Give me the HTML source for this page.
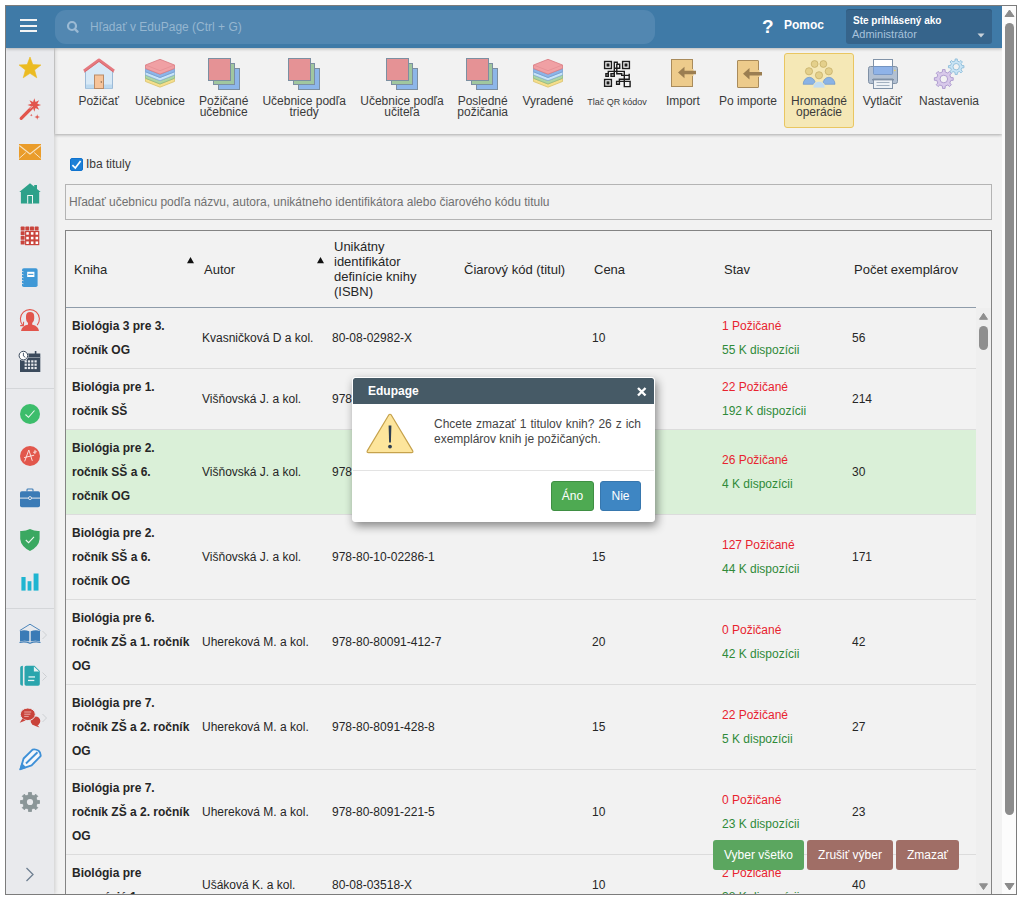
<!DOCTYPE html>
<html><head><meta charset="utf-8">
<style>
*{box-sizing:border-box;margin:0;padding:0}
html,body{width:1022px;height:900px;overflow:hidden;background:#fff;font-family:"Liberation Sans",sans-serif;}
.a{position:absolute}
#frame{position:absolute;left:5px;top:5px;width:1012px;height:890px;border:1px solid #7c7c7c;}
#clip{position:absolute;left:6px;top:6px;width:1010px;height:888px;overflow:hidden;background:#f2f2f2}
#hdr{left:0;top:0;width:996px;height:42px;background:#3f7aa7;box-shadow:0 1px 3px rgba(0,0,0,.25);z-index:5}
#srch{left:49px;top:4px;width:600px;height:34px;border-radius:11px;background:#5287b1}
#side{left:0;top:42px;width:48px;height:846px;background:#e9eaed;box-shadow:1px 0 4px rgba(0,0,0,.16);z-index:3}
#tb{left:49px;top:42px;width:947px;height:86px;background:#f2f2f2;box-shadow:0 1px 3px rgba(0,0,0,.3);z-index:2}
#osb{left:996px;top:0;width:14px;height:888px;background:#fcfcfc;z-index:6}
.tl{position:absolute;width:120px;margin-left:-60px;text-align:center;font-size:12px;line-height:11px;color:#3b3b3b;white-space:nowrap;margin-top:1px}
svg{position:absolute;overflow:visible}
.hd{position:absolute;font-size:13px;line-height:15px;color:#262626;white-space:nowrap}
.rw{position:absolute;left:66px;width:910px;border-bottom:1px solid #dcdcdc}
.c{position:absolute;top:0;display:flex;align-items:center;padding:0 6px;font-size:12px;line-height:24px;color:#262626;white-space:nowrap}
.t{font-weight:bold}
.btn{position:absolute;border-radius:3px;color:#fff;font-size:12px;line-height:14px;display:flex;align-items:center;justify-content:center;white-space:nowrap}

.rd{color:#e8232f}.gr{color:#2f8a39}

</style></head>
<body>
<div id="frame"></div>
<div id="clip">
 <!-- HEADER -->
 <div id="hdr" class="a">
  <div class="a" style="left:14px;top:13px;width:17px;height:2px;background:#f4f4f4"></div>
  <div class="a" style="left:14px;top:18.5px;width:17px;height:2px;background:#f4f4f4"></div>
  <div class="a" style="left:14px;top:24px;width:17px;height:2px;background:#f4f4f4"></div>
  <div id="srch" class="a">
   <svg style="left:0;top:0" width="40" height="34"><circle cx="17" cy="16" r="4" fill="none" stroke="#9bbad4" stroke-width="2.2"/><line x1="19.8" y1="19" x2="22.5" y2="21.7" stroke="#9bbad4" stroke-width="2.4" stroke-linecap="round"/></svg>
   <div class="a" style="left:35px;top:10px;font-size:12px;line-height:14px;color:#95b6d0;white-space:nowrap">Hľadať v EduPage (Ctrl + G)</div>
  </div>
  <div class="a" style="left:756px;top:10.5px;font-size:19px;line-height:20px;font-weight:bold;color:#fff">?</div>
  <div class="a" style="left:778px;top:12px;font-size:12px;line-height:14px;font-weight:bold;color:#fff">Pomoc</div>
  <div class="a" style="left:840px;top:3px;width:146px;height:35px;border-radius:3px;background:#36648b;box-shadow:inset 0 1px 0 rgba(0,0,0,.12)">
   <div class="a" style="left:7px;top:6px;font-size:10px;line-height:12px;font-weight:bold;color:#fff;white-space:nowrap">Ste prihlásený ako</div>
   <div class="a" style="left:6px;top:19px;font-size:11px;line-height:13px;color:#a7c2dc;white-space:nowrap">Administrátor</div>
   <svg style="left:131px;top:24px" width="10" height="6"><path d="M0.5 0.5 L7.5 0.5 L4 4.5 Z" fill="#c9d2da"/></svg>
  </div>
 </div>

 <!-- SIDEBAR -->
 <div id="side" class="a"></div>
<svg style="left:-6px;top:-6px;z-index:4" width="60" height="900">
 <line x1="6" y1="388.5" x2="54" y2="388.5" stroke="#d4d6d9" stroke-width="1"/>
 <line x1="6" y1="608.5" x2="54" y2="608.5" stroke="#d4d6d9" stroke-width="1"/>
 <!-- star -->
 <path d="M30.00,57.00 L32.82,64.62 L40.94,64.95 L34.57,69.98 L36.76,77.80 L30.00,73.30 L23.24,77.80 L25.43,69.98 L19.06,64.95 L27.18,64.62Z" fill="#ebbb22" stroke="#ebbb22" stroke-width="0.6" stroke-linejoin="round"/>
 <!-- wand -->
 <path d="M34.30,98.20 L35.52,102.04 L39.11,100.19 L37.26,103.78 L41.10,105.00 L37.26,106.22 L39.11,109.81 L35.52,107.96 L34.30,111.80 L33.08,107.96 L29.49,109.81 L31.34,106.22 L27.50,105.00 L31.34,103.78 L29.49,100.19 L33.08,102.04Z" fill="#e2554c"/>
 <line x1="21.2" y1="118.3" x2="31.5" y2="108" stroke="#e2554c" stroke-width="3.2" stroke-linecap="round"/>
 <line x1="30" y1="108.6" x2="32.6" y2="106" stroke="#e9eaed" stroke-width="0.9"/>
 <path d="M37.20,114.20 L37.84,116.36 L40.00,117.00 L37.84,117.64 L37.20,119.80 L36.56,117.64 L34.40,117.00 L36.56,116.36Z" fill="#e2554c"/>
 <path d="M31.30,113.80 L31.65,114.85 L32.70,115.20 L31.65,115.55 L31.30,116.60 L30.95,115.55 L29.90,115.20 L30.95,114.85Z" fill="#e2554c"/>
 <!-- mail -->
 <rect x="19" y="144" width="22" height="16" fill="#ea9c2a"/>
 <path d="M19.3 145.5 L30 154 L40.7 145.5" fill="none" stroke="#f7e3c2" stroke-width="1.1"/>
 <path d="M19.3 158.3 L25.8 152.6 M40.7 158.3 L34.2 152.6" fill="none" stroke="#f7e3c2" stroke-width="1"/>
 <!-- house -->
 <path d="M30 183.3 L40.7 192 L39.2 192 L39.2 203.6 L20.9 203.6 L20.9 192 L19.3 192 Z" fill="#2da18a"/>
 <rect x="34.2" y="185" width="2.8" height="5" fill="#2da18a"/>
 <rect x="27.2" y="195" width="5.8" height="8.6" fill="#f2f7f5"/>
 <rect x="28.2" y="196" width="3.8" height="7.6" fill="#2da18a"/>
 <!-- grid -->
 <rect x="25.05" y="230.95" width="14.25" height="14.25" fill="#c9443c"/>
 <rect x="20.70" y="226.60" width="3.95" height="3.95" rx="0.6" fill="#c9443c"/>
 <rect x="25.35" y="226.60" width="3.95" height="3.95" rx="0.6" fill="#c9443c"/>
 <rect x="30.00" y="226.60" width="3.95" height="3.95" rx="0.6" fill="#c9443c"/>
 <rect x="34.65" y="226.60" width="3.95" height="3.95" rx="0.6" fill="#c9443c"/>
 <rect x="20.70" y="231.25" width="3.95" height="3.95" rx="0.6" fill="#c9443c"/>
 <rect x="20.70" y="235.90" width="3.95" height="3.95" rx="0.6" fill="#c9443c"/>
 <rect x="20.70" y="240.55" width="3.95" height="3.95" rx="0.6" fill="#c9443c"/>
 <rect x="26.25" y="232.15" width="2.55" height="2.55" fill="#fff"/>
 <rect x="26.25" y="236.80" width="2.55" height="2.55" fill="#fff"/>
 <rect x="26.25" y="241.45" width="2.55" height="2.55" fill="#fff"/>
 <rect x="30.90" y="232.15" width="2.55" height="2.55" fill="#fff"/>
 <rect x="30.90" y="236.80" width="2.55" height="2.55" fill="#fff"/>
 <rect x="30.90" y="241.45" width="2.55" height="2.55" fill="#fff"/>
 <rect x="35.55" y="232.15" width="2.55" height="2.55" fill="#fff"/>
 <rect x="35.55" y="236.80" width="2.55" height="2.55" fill="#fff"/>
 <rect x="35.55" y="241.45" width="2.55" height="2.55" fill="#fff"/>
 <!-- notebook -->
 <rect x="22" y="268.3" width="15.6" height="18.7" rx="1.8" fill="#3f98d6"/>
 <rect x="27.2" y="271.8" width="7.2" height="5.2" fill="#fff"/>
 <rect x="28.2" y="273.8" width="5.2" height="1.1" fill="#3f98d6"/>
 <g stroke="#e9eaed" stroke-width="0.8"><line x1="21" y1="271" x2="23.5" y2="271.8"/><line x1="21" y1="274" x2="23.5" y2="274.8"/><line x1="21" y1="277" x2="23.5" y2="277.8"/><line x1="21" y1="280" x2="23.5" y2="280.8"/><line x1="21" y1="283" x2="23.5" y2="283.8"/></g>
 <!-- person -->
 <path d="M22.6 325.2 A9.5 9.5 0 1 1 37.2 325.2" fill="none" stroke="#e2554c" stroke-width="1.05"/>
 <path d="M20.2 325.6 L23.4 325.6 L23.6 321.8" fill="none" stroke="#e2554c" stroke-width="1.05"/>
 <path d="M26 316.3 Q26 312 30.1 312 Q34.2 312 34.2 316.3 L34.2 318.5 Q34.2 321.5 32.2 323 L32.2 325 L28 325 L28 323 Q26 321.5 26 318.5 Z" fill="#e2554c"/>
 <path d="M21 331 Q21.8 326 27.5 324.8 L32.5 324.8 Q38.2 326 39 331 Z" fill="#e2554c"/>
 <!-- calendar -->
 <rect x="20" y="353.5" width="20.3" height="18.5" fill="#3b4a5c"/>
 <rect x="34.8" y="351" width="1.6" height="4" fill="#3b4a5c"/>
 <rect x="20" y="357" width="20.3" height="0.8" fill="#9aa3ad"/>
 <g fill="#e9eaed">
  <rect x="24.6" y="360.3" width="2.2" height="2.2"/>
  <rect x="27.9" y="360.3" width="2.2" height="2.2"/>
  <rect x="31.2" y="360.3" width="2.2" height="2.2"/>
  <rect x="34.5" y="360.3" width="2.2" height="2.2"/>
  <rect x="24.6" y="363.6" width="2.2" height="2.2"/>
  <rect x="27.9" y="363.6" width="2.2" height="2.2"/>
  <rect x="31.2" y="363.6" width="2.2" height="2.2"/>
  <rect x="34.5" y="363.6" width="2.2" height="2.2"/>
  <rect x="24.6" y="366.9" width="2.2" height="2.2"/>
  <rect x="27.9" y="366.9" width="2.2" height="2.2"/>
  <rect x="31.2" y="366.9" width="2.2" height="2.2"/>
  <rect x="34.5" y="366.9" width="2.2" height="2.2"/>
 </g>
 <circle cx="23.4" cy="355.6" r="5.2" fill="#e9eaed"/>
 <circle cx="23.4" cy="355.6" r="4.3" fill="#fff" stroke="#3b4a5c" stroke-width="1"/>
 <path d="M23.4 352.8 L23.4 356 L25.3 357.3" fill="none" stroke="#3b4a5c" stroke-width="0.9"/>
 <!-- check badge -->
 <circle cx="30" cy="414" r="10" fill="#3cbd6b"/>
 <path d="M25.5 414.5 L28.5 417.3 L34.5 410.5" fill="none" stroke="#eaf7ee" stroke-width="1.1"/>
 <!-- A+ -->
 <circle cx="30" cy="456" r="10" fill="#e2574c"/>
 <path d="M24.8 461 L28.8 450 L32.2 460.5 M24.5 457.5 L33.8 455.3 M33.6 452.3 L36.4 451.8 M35 450.3 L34.9 453.6" fill="none" stroke="#fbe6e4" stroke-width="0.95" stroke-linecap="round"/>
 <!-- briefcase -->
 <rect x="20" y="491.3" width="20" height="16" rx="1.8" fill="#3b7bb6"/>
 <path d="M27 491.5 L27 489.8 Q27 489 28 489 L32 489 Q33 489 33 489.8 L33 491.5" fill="none" stroke="#3b7bb6" stroke-width="1.1"/>
 <rect x="20" y="497.6" width="20" height="1" fill="#e9eaed"/>
 <circle cx="30" cy="498.1" r="1.5" fill="#3b7bb6" stroke="#e9eaed" stroke-width="0.9"/>
 <!-- shield -->
 <path d="M30 529 Q35 531.5 39.6 531 L39.6 539 Q39 546.5 30 551 Q21 546.5 20.2 539 L20.2 531 Q25 531.5 30 529 Z" fill="#3aa861"/>
 <path d="M25.8 540 L28.6 542.7 L34 536.8" fill="none" stroke="#eaf7ee" stroke-width="1.1"/>
 <!-- chart -->
 <g fill="#1fb5d1"><rect x="21.4" y="577" width="4.2" height="13.6"/><rect x="27.6" y="581.2" width="3.8" height="9.4"/><rect x="33.6" y="573.5" width="4.9" height="17.1"/></g>
 <!-- book -->
 <path d="M19.8 630.5 L30 624.2 L40.3 630.5" fill="none" stroke="#3b7bb6" stroke-width="0.9"/>
 <path d="M20 631 Q24.5 629.5 29.3 631.3 L29.3 641.5 Q24.5 640 20 641.5 Z M30.7 631.3 Q35.5 629.5 40 631 L40 641.5 Q35.5 640 30.7 641.5 Z" fill="#3b7bb6"/>
 <path d="M19.5 642.5 Q25 641 30 643.3 Q35 641 40.5 642.5" fill="none" stroke="#3b7bb6" stroke-width="1.2"/>
 <!-- doc -->
 <path d="M22.9 665.8 L22.9 685.7 Q20.2 685.7 20.2 683.5 L20.2 668 Q20.2 665.8 22.9 665.8 Z" fill="#2aa5ad"/>
 <path d="M24.5 667.5 Q24.5 665.8 26.2 665.8 L34.5 665.8 L39.8 671 L39.8 684 Q39.8 685.7 38.1 685.7 L26.2 685.7 Q24.5 685.7 24.5 684 Z" fill="#2aa5ad"/>
 <path d="M33.9 666.4 L39.2 671.6 L33.9 671.6 Z" fill="#e9f3f4"/>
 <rect x="28.5" y="676.3" width="6.5" height="1.3" fill="#e6f4f5"/>
 <rect x="28" y="679.8" width="6.3" height="1.3" fill="#e6f4f5"/>
 <!-- chat -->
 <ellipse cx="35.5" cy="721" rx="4.8" ry="4.5" fill="#c9433a"/>
 <path d="M37 724.5 L39.5 727.5 L34 725.5 Z" fill="#c9433a"/>
 <ellipse cx="27.8" cy="714.3" rx="7.5" ry="6.3" fill="#c9433a" stroke="#e9eaed" stroke-width="1"/>
 <path d="M22.5 718.5 L19.7 722.8 L25.5 720.5 Z" fill="#c9433a"/>
 <g fill="#e7a9a4"><rect x="24.2" y="711.5" width="7" height="1"/><rect x="24.2" y="713.7" width="6.2" height="1"/><rect x="24.2" y="715.9" width="4.5" height="1"/></g>
 <!-- chevrons small -->
 <path d="M42.5 631 L46.5 635 L42.5 639" fill="none" stroke="#c9ccd0" stroke-width="0.9"/>
 <path d="M42.5 672.5 L46.5 676.5 L42.5 680.5" fill="none" stroke="#c9ccd0" stroke-width="0.9"/>
 <path d="M42.5 714 L46.5 718 L42.5 722" fill="none" stroke="#c9ccd0" stroke-width="0.9"/>
 <!-- pencil -->
 <path d="M23.6 758.5 L32.6 749.6 Q35.5 748.8 38.6 750.8 Q41 752.8 40.6 756.2 L31.6 765.3 L20.5 769.2 Z" fill="#f4f7fb" stroke="#3e90d7" stroke-width="1.9" stroke-linejoin="round"/>
 <path d="M26 763.5 L37.5 752.3" fill="none" stroke="#3e90d7" stroke-width="1.9"/>
 <path d="M19.2 770.2 L21.6 762.8 L26.6 767.8 Z" fill="#3e90d7"/>
 <!-- gear -->
 <path d="M37.15,800.52 L39.48,800.48 L39.48,803.52 L37.15,803.48 L36.10,806.01 L37.78,807.63 L35.63,809.78 L34.01,808.10 L31.48,809.15 L31.52,811.48 L28.48,811.48 L28.52,809.15 L25.99,808.10 L24.37,809.78 L22.22,807.63 L23.90,806.01 L22.85,803.48 L20.52,803.52 L20.52,800.48 L22.85,800.52 L23.90,797.99 L22.22,796.37 L24.37,794.22 L25.99,795.90 L28.52,794.85 L28.48,792.52 L31.52,792.52 L31.48,794.85 L34.01,795.90 L35.63,794.22 L37.78,796.37 L36.10,797.99Z" fill="#8b9698" stroke="#8b9698" stroke-width="0.9" stroke-linejoin="round"/>
 <circle cx="30" cy="802" r="3.1" fill="#e9eaed"/>
 <!-- bottom chevron -->
 <path d="M26.5 868 L33 874.5 L26.5 881" fill="none" stroke="#6e7f91" stroke-width="1.3"/>
</svg>

 <!-- TOOLBAR -->
 <div id="tb" class="a"></div>
 <div class="a" style="left:-6px;top:-6px;width:1010px;height:140px;z-index:3">
  <!-- highlight box -->
  <div class="a" style="left:784px;top:53px;width:70px;height:75px;background:#f5e8b6;border:1px solid #e9c661;border-radius:3px"></div>
  <svg style="left:0;top:0" width="1010" height="140">
   <!-- house -->
   <path d="M85.5 70 L99 60.5 L112.5 70 L112.5 88.5 L85.5 88.5 Z" fill="#d8e9f6" stroke="#9cbad7" stroke-width="1"/>
   <rect x="86" y="84.5" width="26" height="3.8" fill="#bcd9ef"/>
   <path d="M84 71 L99 60 L114 71" fill="none" stroke="#e57a80" stroke-width="3" stroke-linejoin="round"/>
   <path d="M84 71 L99 60 L114 71" fill="none" stroke="#cf5c62" stroke-width="0.6" stroke-linejoin="round" transform="translate(0,1.4)"/>
   <rect x="94.5" y="75" width="9" height="13.5" fill="#f6c49a" stroke="#b98b67" stroke-width="1"/>
   <circle cx="101.3" cy="82" r="0.7" fill="#7a5a40"/>
   <!-- layers 1 -->
   <g transform="translate(145,59.3)">
    <path d="M0.5 19 L15 24.7 L29.5 19 L29.5 22.2 L15 27.9 L0.5 22.2 Z" fill="#f5df8c" stroke="#d6bb62" stroke-width="0.7"/>
    <path d="M0.5 15.7 L15 21.4 L29.5 15.7 L29.5 19 L15 24.7 L0.5 19 Z" fill="#acd5a6" stroke="#86b57f" stroke-width="0.7"/>
    <path d="M0.5 12.5 L15 18.2 L29.5 12.5 L29.5 15.7 L15 21.4 L0.5 15.7 Z" fill="#c8e4f7" stroke="#7fa9d6" stroke-width="0.7"/>
    <path d="M0.5 9.2 L15 14.9 L29.5 9.2 L29.5 12.5 L15 18.2 L0.5 12.5 Z" fill="#8cb5e9" stroke="#6e98cc" stroke-width="0.7"/>
    <path d="M0.5 5.7 L15 0 L29.5 5.7 L29.5 9.2 L15 14.9 L0.5 9.2 Z" fill="#f0a0a4" stroke="#d97a80" stroke-width="0.8"/>
    <path d="M0.5 5.7 L15 11.4 L29.5 5.7" fill="none" stroke="#e08a8f" stroke-width="0.6"/>
   </g>
   <!-- squares -->
   <g>
    <rect x="218.5" y="68.5" width="21" height="21" fill="#8db6e9" stroke="#7c8fa1" stroke-width="1"/>
    <rect x="213.5" y="63.5" width="21" height="21" fill="#a0c79f" stroke="#7c8fa1" stroke-width="1"/>
    <rect x="208.5" y="58.5" width="22" height="22" fill="#e59295" stroke="#7c8fa1" stroke-width="1"/>
   </g>
   <g transform="translate(80,0)">
    <rect x="218.5" y="68.5" width="21" height="21" fill="#8db6e9" stroke="#7c8fa1" stroke-width="1"/>
    <rect x="213.5" y="63.5" width="21" height="21" fill="#a0c79f" stroke="#7c8fa1" stroke-width="1"/>
    <rect x="208.5" y="58.5" width="22" height="22" fill="#e59295" stroke="#7c8fa1" stroke-width="1"/>
   </g>
   <g transform="translate(178,0)">
    <rect x="218.5" y="68.5" width="21" height="21" fill="#8db6e9" stroke="#7c8fa1" stroke-width="1"/>
    <rect x="213.5" y="63.5" width="21" height="21" fill="#a0c79f" stroke="#7c8fa1" stroke-width="1"/>
    <rect x="208.5" y="58.5" width="22" height="22" fill="#e59295" stroke="#7c8fa1" stroke-width="1"/>
   </g>
   <g transform="translate(258,0)">
    <rect x="218.5" y="68.5" width="21" height="21" fill="#8db6e9" stroke="#7c8fa1" stroke-width="1"/>
    <rect x="213.5" y="63.5" width="21" height="21" fill="#a0c79f" stroke="#7c8fa1" stroke-width="1"/>
    <rect x="208.5" y="58.5" width="22" height="22" fill="#e59295" stroke="#7c8fa1" stroke-width="1"/>
   </g>
   <!-- layers 2 -->
   <g transform="translate(533,59.3)">
    <path d="M0.5 19 L15 24.7 L29.5 19 L29.5 22.2 L15 27.9 L0.5 22.2 Z" fill="#f5df8c" stroke="#d6bb62" stroke-width="0.7"/>
    <path d="M0.5 15.7 L15 21.4 L29.5 15.7 L29.5 19 L15 24.7 L0.5 19 Z" fill="#acd5a6" stroke="#86b57f" stroke-width="0.7"/>
    <path d="M0.5 12.5 L15 18.2 L29.5 12.5 L29.5 15.7 L15 21.4 L0.5 15.7 Z" fill="#c8e4f7" stroke="#7fa9d6" stroke-width="0.7"/>
    <path d="M0.5 9.2 L15 14.9 L29.5 9.2 L29.5 12.5 L15 18.2 L0.5 12.5 Z" fill="#8cb5e9" stroke="#6e98cc" stroke-width="0.7"/>
    <path d="M0.5 5.7 L15 0 L29.5 5.7 L29.5 9.2 L15 14.9 L0.5 9.2 Z" fill="#f0a0a4" stroke="#d97a80" stroke-width="0.8"/>
    <path d="M0.5 5.7 L15 11.4 L29.5 5.7" fill="none" stroke="#e08a8f" stroke-width="0.6"/>
   </g>
   <!-- QR -->
   <g fill="none" stroke="#1c1c1c" stroke-width="1.4">
    <rect x="604.6" y="61.5" width="6.8" height="7" fill="#fff"/><rect x="622.6" y="61.5" width="6.8" height="7" fill="#fff"/><rect x="604.6" y="79.5" width="6.8" height="6.8" fill="#fff"/>
    <path d="M614.3 62.3 L617.2 62.3 L617.2 64.3 L619.7 64.3 L619.7 68.3 L614.3 68.3 Z M616.8 63.9 L616.8 73.7 L621.7 73.7 L621.7 75.4 L629.2 75.4 L629.2 79.2 L619.4 79.2 L619.4 84.3 L616.6 84.3 L616.6 81.4 L630.1 81.4 L630.1 86.6 L624.3 86.6 L624.3 71.4 L608.3 71.4 L608.3 76.3 L605.9 76.3 L605.9 73.7 L608.3 73.7 M614.3 68.3 L614.3 76.3 L611 76.3 L611 73.7 L614.3 73.7 M629.2 75.4 L629.2 73.7"/>
   </g>
   <g fill="#1c1c1c"><rect x="606.5" y="63.4" width="3" height="3.2"/><rect x="624.5" y="63.4" width="3" height="3.2"/><rect x="606.5" y="81.3" width="3" height="3.2"/></g>
   <!-- import 1 -->
   <rect x="671.5" y="59.5" width="21" height="27" fill="#edcb8b" stroke="#a98b5b" stroke-width="1"/>
   <rect x="691.5" y="69" width="2" height="7" fill="#edcb8b"/>
   <path d="M678 72.5 L684.5 66.8 L684.5 70.8 L696 70.8 L696 74.2 L684.5 74.2 L684.5 78.2 Z" fill="#9b7e51"/>
   <!-- import 2 -->
   <rect x="737.5" y="60.5" width="21" height="27" rx="0.5" fill="#edcb8b" stroke="#a98b5b" stroke-width="1"/>
   <rect x="757.5" y="70" width="2" height="7" fill="#edcb8b"/>
   <path d="M743 73.7 L749.5 68 L749.5 72 L762 72 L762 75.4 L749.5 75.4 L749.5 79.4 Z" fill="#9b7e51"/>
   <!-- people -->
   <g fill="#e4d08b" stroke="#c7b06a" stroke-width="0.8">
    <circle cx="814.6" cy="64" r="3.4"/><circle cx="823.4" cy="64" r="3.4"/><circle cx="809" cy="71.3" r="3.6"/><circle cx="828.8" cy="71.3" r="3.6"/><circle cx="819" cy="75.3" r="3.6"/>
   </g>
   <path d="M803.2 84.3 A6.1 7 0 0 1 815.4 84.3 Z" fill="#8ab3e5" stroke="#6f97c8" stroke-width="0.7"/>
   <path d="M822.8 84.3 A6.1 7 0 0 1 835 84.3 Z" fill="#8ab3e5" stroke="#6f97c8" stroke-width="0.7"/>
   <path d="M812.8 88 A6.2 6.8 0 0 1 825.2 88 Z" fill="#c2ddf2" stroke="#f5e8b6" stroke-width="0.8"/>
   <!-- printer -->
   <rect x="873.5" y="59.5" width="19" height="9" fill="#fff" stroke="#8193a8" stroke-width="1"/>
   <rect x="868.5" y="66.5" width="29" height="17" rx="2" fill="#b2c0d2" stroke="#7f90a5" stroke-width="1"/>
   <rect x="873.5" y="66.5" width="19" height="8" rx="1" fill="#8fb3e8" stroke="#7090c0" stroke-width="0.8"/>
   <circle cx="894.8" cy="70.5" r="0.8" fill="#f0d24a"/>
   <rect x="873.5" y="79" width="19" height="9.5" fill="#eef2f6" stroke="#8193a8" stroke-width="1"/>
   <rect x="872" y="79" width="22" height="1.4" fill="#7f90a5"/>
   <line x1="876.5" y1="82.5" x2="889.5" y2="82.5" stroke="#9aa9ba" stroke-width="0.9"/>
   <line x1="876.5" y1="85.5" x2="889.5" y2="85.5" stroke="#9aa9ba" stroke-width="0.9"/>
   <!-- gears -->
   <path id="g1" fill-rule="evenodd" d="M950.86,77.60 L953.21,77.70 L953.21,80.30 L950.86,80.40 L949.79,83.00 L951.37,84.73 L949.53,86.57 L947.80,84.99 L945.20,86.06 L945.10,88.41 L942.50,88.41 L942.40,86.06 L939.80,84.99 L938.07,86.57 L936.23,84.73 L937.81,83.00 L936.74,80.40 L934.39,80.30 L934.39,77.70 L936.74,77.60 L937.81,75.00 L936.23,73.27 L938.07,71.43 L939.80,73.01 L942.40,71.94 L942.50,69.59 L945.10,69.59 L945.20,71.94 L947.80,73.01 L949.53,71.43 L951.37,73.27 L949.79,75.00Z M947.60,79.00 A3.8 3.8 0 1 0 940.00,79.00 A3.8 3.8 0 1 0 947.60,79.00Z" fill="#d8c9ea" stroke="#a996cc" stroke-width="0.9"/>
   <path id="g2" fill-rule="evenodd" d="M961.89,65.57 L963.93,65.63 L963.93,67.77 L961.89,67.83 L961.02,69.92 L962.42,71.41 L960.91,72.92 L959.42,71.52 L957.33,72.39 L957.27,74.43 L955.13,74.43 L955.07,72.39 L952.98,71.52 L951.49,72.92 L949.98,71.41 L951.38,69.92 L950.51,67.83 L948.47,67.77 L948.47,65.63 L950.51,65.57 L951.38,63.48 L949.98,61.99 L951.49,60.48 L952.98,61.88 L955.07,61.01 L955.13,58.97 L957.27,58.97 L957.33,61.01 L959.42,61.88 L960.91,60.48 L962.42,61.99 L961.02,63.48Z M959.40,66.70 A3.2 3.2 0 1 0 953.00,66.70 A3.2 3.2 0 1 0 959.40,66.70Z" fill="#c9e4f5" stroke="#8cbcd9" stroke-width="0.9"/>
  </svg>
  <!-- labels -->
  <div class="tl" style="left:98.7px;top:95px">Požičať</div>
  <div class="tl" style="left:160px;top:95px">Učebnice</div>
  <div class="tl" style="left:223.7px;top:95px">Požičané<br>učebnice</div>
  <div class="tl" style="left:304.2px;top:95px">Učebnice podľa<br>triedy</div>
  <div class="tl" style="left:402px;top:95px">Učebnice podľa<br>učiteľa</div>
  <div class="tl" style="left:482.7px;top:95px">Posledné<br>požičania</div>
  <div class="tl" style="left:547.9px;top:95px">Vyradené</div>
  <div class="tl" style="left:617px;top:96px;font-size:9px">Tlač QR kódov</div>
  <div class="tl" style="left:682.9px;top:95px">Import</div>
  <div class="tl" style="left:748px;top:95px">Po importe</div>
  <div class="tl" style="left:819px;top:95px">Hromadné<br>operácie</div>
  <div class="tl" style="left:882.4px;top:95px">Vytlačiť</div>
  <div class="tl" style="left:949px;top:95px">Nastavenia</div>
 </div>

 <!-- CONTENT -->
 <div class="a" style="left:-6px;top:-6px;width:1010px;height:900px;z-index:1">
  <div class="a" style="left:70px;top:158px;width:13px;height:13px;border-radius:2px;background:#1e80d6;border:1px solid #0f73cf"></div>
  <svg style="left:70px;top:158px" width="13" height="13"><path d="M2.4 7.2 L5.3 10 L10.6 3" fill="none" stroke="#fff" stroke-width="1.7"/></svg>
  <div class="a" style="left:86px;top:157px;font-size:12px;line-height:14px;color:#3a3a3a">Iba tituly</div>
  <div class="a" style="left:65px;top:184px;width:927px;height:36px;border:1px solid #b4b4b4"></div>
  <div class="a" style="left:69px;top:195px;font-size:12px;line-height:14px;color:#707070;white-space:nowrap">Hľadať učebnicu podľa názvu, autora, unikátneho identifikátora alebo čiarového kódu titulu</div>
  <!-- table -->
  <div class="a" style="left:65px;top:230px;width:927px;height:680px;border:1px solid #848484"></div>
  <div class="a" style="left:66px;top:307px;width:910px;height:1px;background:#8f9caa"></div>
  <div class="hd" style="left:74px;top:262px">Kniha</div>
  <div class="hd" style="left:204px;top:262px">Autor</div>
  <div class="hd" style="left:334px;top:239px">Unikátny<br>identifikátor<br>definície knihy<br>(ISBN)</div>
  <div class="hd" style="left:464px;top:262px">Čiarový kód (titul)</div>
  <div class="hd" style="left:594px;top:262px">Cena</div>
  <div class="hd" style="left:724px;top:262px">Stav</div>
  <div class="hd" style="left:854px;top:262px">Počet exemplárov</div>
  <svg style="left:0;top:0" width="1000" height="300"><path d="M187 263.3 L190.5 257 L194 263.3 Z M317 263.3 L320.5 257 L324 263.3 Z" fill="#111"/></svg>
  <!-- rows -->
  <div class="rw" style="top:308px;height:61px;">
   <div class="c t" style="left:0;width:130px;height:60px"><div>Biológia 3 pre 3.<br>ročník OG</div></div>
   <div class="c" style="left:130px;width:130px;height:60px"><div>Kvasničková D a kol.</div></div>
   <div class="c" style="left:260px;width:130px;height:60px"><div>80-08-02982-X</div></div>
   <div class="c" style="left:390px;width:130px;height:60px"><div></div></div>
   <div class="c" style="left:520px;width:130px;height:60px"><div>10</div></div>
   <div class="c" style="left:650px;width:130px;height:60px"><div><span class="rd">1 Požičané</span><br><span class="gr">55 K dispozícii</span></div></div>
   <div class="c" style="left:780px;width:130px;height:60px"><div>56</div></div>
  </div>
  <div class="rw" style="top:369px;height:61px;">
   <div class="c t" style="left:0;width:130px;height:60px"><div>Biológia pre 1.<br>ročník SŠ</div></div>
   <div class="c" style="left:130px;width:130px;height:60px"><div>Višňovská J. a kol.</div></div>
   <div class="c" style="left:260px;width:130px;height:60px"><div>978-80-10-01234-5</div></div>
   <div class="c" style="left:390px;width:130px;height:60px"><div></div></div>
   <div class="c" style="left:520px;width:130px;height:60px"><div>15</div></div>
   <div class="c" style="left:650px;width:130px;height:60px"><div><span class="rd">22 Požičané</span><br><span class="gr">192 K dispozícii</span></div></div>
   <div class="c" style="left:780px;width:130px;height:60px"><div>214</div></div>
  </div>
  <div class="rw" style="top:430px;height:85px;background:#daf0d8;">
   <div class="c t" style="left:0;width:130px;height:84px"><div>Biológia pre 2.<br>ročník SŠ a 6.<br>ročník OG</div></div>
   <div class="c" style="left:130px;width:130px;height:84px"><div>Višňovská J. a kol.</div></div>
   <div class="c" style="left:260px;width:130px;height:84px"><div>978-80-10-02286-1</div></div>
   <div class="c" style="left:390px;width:130px;height:84px"><div></div></div>
   <div class="c" style="left:520px;width:130px;height:84px"><div>15</div></div>
   <div class="c" style="left:650px;width:130px;height:84px"><div><span class="rd">26 Požičané</span><br><span class="gr">4 K dispozícii</span></div></div>
   <div class="c" style="left:780px;width:130px;height:84px"><div>30</div></div>
  </div>
  <div class="rw" style="top:515px;height:85px;">
   <div class="c t" style="left:0;width:130px;height:84px"><div>Biológia pre 2.<br>ročník SŠ a 6.<br>ročník OG</div></div>
   <div class="c" style="left:130px;width:130px;height:84px"><div>Višňovská J. a kol.</div></div>
   <div class="c" style="left:260px;width:130px;height:84px"><div>978-80-10-02286-1</div></div>
   <div class="c" style="left:390px;width:130px;height:84px"><div></div></div>
   <div class="c" style="left:520px;width:130px;height:84px"><div>15</div></div>
   <div class="c" style="left:650px;width:130px;height:84px"><div><span class="rd">127 Požičané</span><br><span class="gr">44 K dispozícii</span></div></div>
   <div class="c" style="left:780px;width:130px;height:84px"><div>171</div></div>
  </div>
  <div class="rw" style="top:600px;height:85px;">
   <div class="c t" style="left:0;width:130px;height:84px"><div>Biológia pre 6.<br>ročník ZŠ a 1. ročník<br>OG</div></div>
   <div class="c" style="left:130px;width:130px;height:84px"><div>Uhereková M. a kol.</div></div>
   <div class="c" style="left:260px;width:130px;height:84px"><div>978-80-80091-412-7</div></div>
   <div class="c" style="left:390px;width:130px;height:84px"><div></div></div>
   <div class="c" style="left:520px;width:130px;height:84px"><div>20</div></div>
   <div class="c" style="left:650px;width:130px;height:84px"><div><span class="rd">0 Požičané</span><br><span class="gr">42 K dispozícii</span></div></div>
   <div class="c" style="left:780px;width:130px;height:84px"><div>42</div></div>
  </div>
  <div class="rw" style="top:685px;height:85px;">
   <div class="c t" style="left:0;width:130px;height:84px"><div>Biológia pre 7.<br>ročník ZŠ a 2. ročník<br>OG</div></div>
   <div class="c" style="left:130px;width:130px;height:84px"><div>Uhereková M. a kol.</div></div>
   <div class="c" style="left:260px;width:130px;height:84px"><div>978-80-8091-428-8</div></div>
   <div class="c" style="left:390px;width:130px;height:84px"><div></div></div>
   <div class="c" style="left:520px;width:130px;height:84px"><div>15</div></div>
   <div class="c" style="left:650px;width:130px;height:84px"><div><span class="rd">22 Požičané</span><br><span class="gr">5 K dispozícii</span></div></div>
   <div class="c" style="left:780px;width:130px;height:84px"><div>27</div></div>
  </div>
  <div class="rw" style="top:770px;height:85px;">
   <div class="c t" style="left:0;width:130px;height:84px"><div>Biológia pre 7.<br>ročník ZŠ a 2. ročník<br>OG</div></div>
   <div class="c" style="left:130px;width:130px;height:84px"><div>Uhereková M. a kol.</div></div>
   <div class="c" style="left:260px;width:130px;height:84px"><div>978-80-8091-221-5</div></div>
   <div class="c" style="left:390px;width:130px;height:84px"><div></div></div>
   <div class="c" style="left:520px;width:130px;height:84px"><div>10</div></div>
   <div class="c" style="left:650px;width:130px;height:84px"><div><span class="rd">0 Požičané</span><br><span class="gr">23 K dispozícii</span></div></div>
   <div class="c" style="left:780px;width:130px;height:84px"><div>23</div></div>
  </div>
  <div class="rw" style="top:855px;height:61px;">
   <div class="c t" style="left:0;width:130px;height:60px"><div>Biológia pre<br>gymnáziá 1.</div></div>
   <div class="c" style="left:130px;width:130px;height:60px"><div>Ušáková K. a kol.</div></div>
   <div class="c" style="left:260px;width:130px;height:60px"><div>80-08-03518-X</div></div>
   <div class="c" style="left:390px;width:130px;height:60px"><div></div></div>
   <div class="c" style="left:520px;width:130px;height:60px"><div>10</div></div>
   <div class="c" style="left:650px;width:130px;height:60px"><div><span class="rd">2 Požičané</span><br><span class="gr">38 K dispozícii</span></div></div>
   <div class="c" style="left:780px;width:130px;height:60px"><div>40</div></div>
  </div>
  <!-- inner scrollbar -->
  <div class="a" style="left:976px;top:308px;width:15px;height:600px;background:#efefef"></div>
  <svg style="left:976px;top:308px" width="15" height="600"><path d="M3.5 11.3 L7.5 5.3 L11.5 11.3 Z" fill="#8f8f8f" stroke="#8f8f8f" stroke-width="1" stroke-linejoin="round"/><rect x="3" y="18" width="9" height="24" rx="4.5" fill="#8f8f8f"/><path d="M3.5 575.8 L11.5 575.8 L7.5 581.6 Z" fill="#8f8f8f" stroke="#8f8f8f" stroke-width="1" stroke-linejoin="round"/></svg>
 </div>
 <!-- DIALOG -->
 <div class="a" style="left:-6px;top:-6px;width:1010px;height:900px;z-index:4;pointer-events:none">
  <div class="a" style="left:352px;top:377px;width:303px;height:145px;background:#fff;border:1px solid #fff;border-radius:3px;box-shadow:2px 4px 10px rgba(0,0,0,.45);overflow:hidden">
   <div class="a" style="left:0;top:0;width:301px;height:26px;background:#465a66;border-radius:2px 2px 0 0"></div>
   <div class="a" style="left:15px;top:6px;font-size:12px;line-height:14px;font-weight:bold;color:#fff">Edupage</div>
   <svg style="left:284px;top:9px" width="10" height="10"><path d="M1 1 L8.5 8.5 M8.5 1 L1 8.5" stroke="#fff" stroke-width="2.4"/></svg>
   <svg style="left:13px;top:35px" width="50" height="42"><path d="M22.6 2.2 Q24 0.3 25.4 2.2 L46.6 37.6 Q47.6 39.6 45.4 39.6 L2.6 39.6 Q0.4 39.6 1.4 37.6 Z" fill="#fde59c" stroke="#c6a24c" stroke-width="1.2" stroke-linejoin="round"/><path d="M22.6 12.5 L25.4 12.5 L24.9 29.5 L23.1 29.5 Z" fill="#2f3f52"/><circle cx="24" cy="33.6" r="1.9" fill="#2f3f52"/></svg>
   <div class="a" style="left:81px;top:39px;width:207px;font-size:12px;line-height:15px;color:#454545;text-align:justify;text-align-last:left">Chcete zmazať 1 titulov knih? 26 z ich exemplárov knih je požičaných.</div>
   <div class="a" style="left:0;top:92px;width:302px;height:1px;background:#e3e3e3"></div>
   <div class="btn" style="left:198px;top:103px;width:43px;height:30px;background:#4eaa52;border:1px solid #3f8f43">Áno</div>
   <div class="btn" style="left:247px;top:103px;width:41px;height:30px;background:#3e86c3;border:1px solid #3777ae">Nie</div>
  </div>
  <!-- bottom buttons -->
  <div class="btn" style="left:713px;top:840px;width:91px;height:30px;background:#5ba65f">Vyber všetko</div>
  <div class="btn" style="left:807px;top:840px;width:86px;height:30px;background:#a06e66">Zrušiť výber</div>
  <div class="btn" style="left:896px;top:840px;width:63px;height:30px;background:#a06e66">Zmazať</div>
 </div>
 <!-- outer scrollbar -->
 <div id="osb" class="a">
  <svg style="left:0;top:0" width="14" height="20"><path d="M3 10.5 L7.5 4 L12 10.5 Z" fill="#8c8c8c" stroke="#8c8c8c" stroke-width="1" stroke-linejoin="round"/></svg>
  <div class="a" style="left:3px;top:17px;width:9px;height:792px;border-radius:4.5px;background:#8c8c8c"></div>
  <svg style="left:0;top:870px" width="14" height="20"><path d="M3 7.5 L12 7.5 L7.5 14 Z" fill="#8c8c8c" stroke="#8c8c8c" stroke-width="1" stroke-linejoin="round"/></svg>
 </div>
</div>
</body></html>
